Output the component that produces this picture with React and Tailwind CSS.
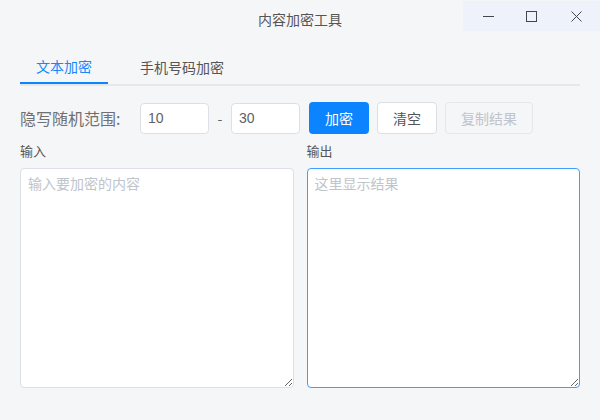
import React from "react";

export default function App() {
  const font = { fontFamily: '"Noto Sans CJK SC", "Noto Sans", sans-serif' };
  const latin = { fontFamily: '"Liberation Sans", "Noto Sans CJK SC", sans-serif' };
  return (
    <div className="w-[600px] h-[420px] bg-[#f5f6f8] overflow-hidden" style={font}>
      {/* Title bar */}
      <div className="relative h-[31px] flex items-center justify-center">
        <span className="text-[14px] leading-[20px] text-[#555] mt-[7px]">内容加密工具</span>
        <div className="absolute right-0 top-[1px] h-[30px] w-[137px] bg-[#eef2fa] flex items-center">
          <div className="w-[46px] h-full flex items-center justify-center pl-[6px]">
            <svg width="11" height="11" viewBox="0 0 11 11"><line x1="0" y1="5.5" x2="11" y2="5.5" stroke="#45454f" strokeWidth="1" /></svg>
          </div>
          <div className="w-[46px] h-full flex items-center justify-center">
            <svg width="11" height="11" viewBox="0 0 11 11"><rect x="0.5" y="0.5" width="10" height="10" fill="none" stroke="#45454f" strokeWidth="1" /></svg>
          </div>
          <div className="w-[46px] h-full flex items-center justify-center pr-[2px]">
            <svg width="11" height="11" viewBox="0 0 11 11"><path d="M0.5 0.5 L10.5 10.5 M10.5 0.5 L0.5 10.5" stroke="#45454f" strokeWidth="1" /></svg>
          </div>
        </div>
      </div>

      <div className="px-5">
        {/* Tabs */}
        <div className="mt-[19px] flex border-b-2 border-[#e4e7ed]">
          <div className="w-[88px] h-[34px] flex items-center justify-center text-[14px] text-[#1787fb] border-b-2 border-[#0d84ff] -mb-[2px]">
            文本加密
          </div>
          <div className="ml-4 w-[116px] h-[34px] flex items-center justify-center text-[14px] text-[#555]">
            手机号码加密
          </div>
        </div>

        {/* Controls row */}
        <div className="mt-4 flex items-center h-8">
          <span className="w-[120px] text-[16px] text-[#707070] leading-8">隐写随机范围:</span>
          <input
            defaultValue="10"
            className="w-[69px] h-[31px] bg-white border border-[#dcdfe6] rounded-[4px] px-[7px] text-[14px] text-[#606266] outline-none"
            style={latin}
          />
          <span className="w-[22px] text-center text-[14px] text-[#606266]">-</span>
          <input
            defaultValue="30"
            className="w-[69px] h-[31px] bg-white border border-[#dcdfe6] rounded-[4px] px-[7px] text-[14px] text-[#606266] outline-none"
            style={latin}
          />
          <button className="ml-[9px] w-[60px] h-8 rounded-[4px] bg-[#0d84ff] text-white text-[14px]" style={font}>
            加密
          </button>
          <button className="ml-2 w-[60px] h-8 rounded-[4px] bg-white border border-[#dcdfe6] text-[#555] text-[14px]" style={font}>
            清空
          </button>
          <button className="ml-2 w-[88px] h-8 rounded-[4px] bg-[#f5f6f8] border border-[#e4e7ed] text-[#c0c4cc] text-[14px]" style={font}>
            复制结果
          </button>
        </div>

        {/* Text areas */}
        <div className="grid grid-cols-2 gap-[13px]">
          <div>
            <div className="mt-2 mb-2 text-[13px] leading-[18px] text-[#555]">输入</div>
            <textarea
              placeholder="输入要加密的内容"
              className="block w-full h-[220px] bg-white border border-[#dcdfe6] rounded-[4px] px-[7px] py-[3px] text-[14px] leading-[22px] text-[#606266] placeholder:text-[#c0c4cc] outline-none"
              style={font}
            />
          </div>
          <div>
            <div className="mt-2 mb-2 text-[13px] leading-[18px] text-[#555]">输出</div>
            <textarea
              placeholder="这里显示结果"
              className="block w-full h-[220px] bg-white border border-[#409eff] rounded-[4px] px-[7px] py-[3px] text-[14px] leading-[22px] text-[#606266] placeholder:text-[#c0c4cc] outline-none"
              style={font}
            />
          </div>
        </div>
      </div>
    </div>
  );
}
